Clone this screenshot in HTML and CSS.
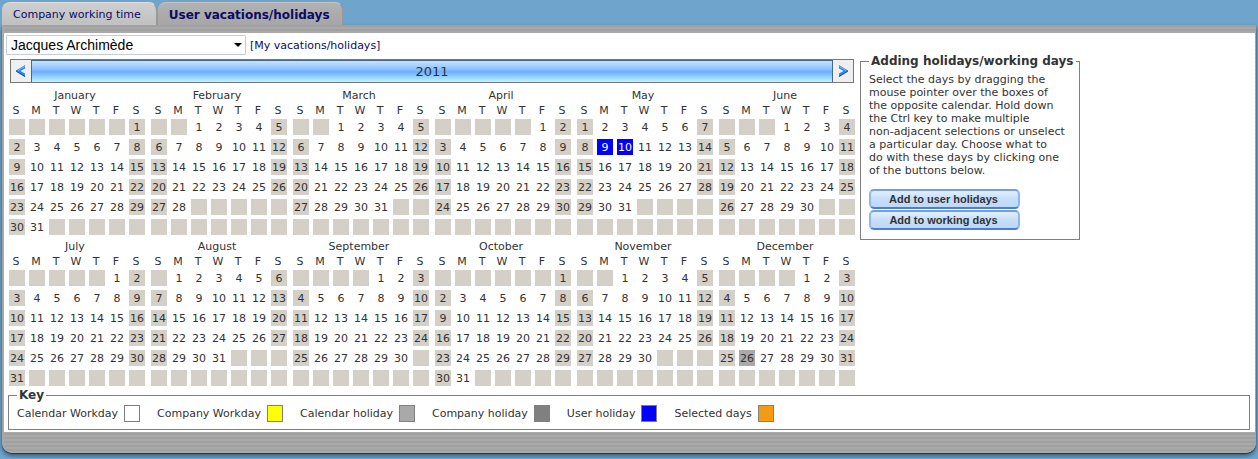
FILE: index.html
```html
<!DOCTYPE html>
<html lang="en">
<head>
<meta charset="utf-8">
<title>User vacations/holidays</title>
<link rel="stylesheet" href="styles.css">
</head>
<body>
<nav class="tabs">
  <a class="tab" href="#company">Company working time</a>
  <a class="tab tab-active" href="#user" aria-current="page">User vacations/holidays</a>
</nav>
<main class="panel">
  <div class="content">
    <div class="toolbar">
      <div class="select-box">
        <select class="user-select" aria-label="User"><option>Jacques Archimède</option></select>
      </div>
      <a class="own-link" href="#mine">[My vacations/holidays]</a>
    </div>
    <div class="columns">
      <section class="calendar">
        <div class="year-bar">
          <button class="year-button" type="button" aria-label="Previous year">
            <svg class="chevron" viewBox="0 0 12 14" aria-hidden="true"><path d="M10 1V4.500L5.500 7L10 9.500V13L1 7.500V6.500Z" fill="#2f86ee"/><path d="M10 9.500V13L1 7.500V6.500L10 12" fill="#1750b4"/><path d="M9.500 2.500L3 6.500" stroke="#7fbaf8" fill="none"/></svg>
          </button>
          <div class="year">2011</div>
          <button class="year-button" type="button" aria-label="Next year">
            <svg class="chevron" viewBox="0 0 12 14" aria-hidden="true"><path d="M2 1V4.500L6.500 7L2 9.500V13L11 7.500V6.500Z" fill="#2f86ee"/><path d="M2 9.500V13L11 7.500V6.500L2 12" fill="#1750b4"/><path d="M2.500 2.500L9 6.500" stroke="#7fbaf8" fill="none"/></svg>
          </button>
        </div>
        <div class="months" id="months"></div>
      </section>
      <fieldset class="box help">
        <legend>Adding holidays/working days</legend>
        <p class="help-text">Select the days by dragging the<br>mouse pointer over the boxes of<br>the opposite calendar. Hold down<br>the Ctrl key to make multiple<br>non-adjacent selections or unselect<br>a particular day. Choose what to<br>do with these days by clicking one<br>of the buttons below.</p>
        <div class="actions">
          <button class="action" type="button">Add to user holidays</button>
          <button class="action" type="button">Add to working days</button>
        </div>
      </fieldset>
    </div>
    <fieldset class="box key">
      <legend>Key</legend>
      <ul class="key-list">
        <li class="key-item">Calendar Workday <span class="swatch"></span></li>
        <li class="key-item">Company Workday <span class="swatch company-workday"></span></li>
        <li class="key-item">Calendar holiday <span class="swatch calendar-holiday"></span></li>
        <li class="key-item">Company holiday <span class="swatch company-holiday"></span></li>
        <li class="key-item">User holiday <span class="swatch user-holiday"></span></li>
        <li class="key-item">Selected days <span class="swatch selected-day"></span></li>
      </ul>
    </fieldset>
  </div>
</main>
<script src="calendar.js"></script>
</body>
</html>
```

FILE: styles.css
```css
* { box-sizing: border-box; }

body {
  margin: 0;
  padding: 2px 2px 5px;
  background: #6fa5cd;
  color: #333;
  font: 11px/13px Verdana, "DejaVu Sans", sans-serif;
}

a { color: #0b0b66; text-decoration: none; }
button { font: inherit; color: inherit; }

.tabs { display: flex; gap: 1px; }

.tab {
  height: 23px;
  padding: 0 15px 0 11px;
  border-top: 1px solid #ddd;
  border-right: 1px solid #999;
  border-radius: 8px 8px 0 0;
  background: linear-gradient(#cfcfcf, #c0c0c0);
  line-height: 24px;
}

.tab-active {
  padding-right: 12px;
  border-top-color: #c4c4c4;
  background: linear-gradient(#b2b2b2, #a6a6a6);
  font-size: 12px;
  font-weight: bold;
}

.panel {
  padding: 8px 1px 21px 0;
  border-left: 2px solid #a8a8a8;
  border-radius: 0 0 10px 10px;
  background: repeating-linear-gradient(#a1a1a1 0 2px, #a9a9a9 2px 4px);
  box-shadow: 0 1px 1px #26384a, 0 3px 5px #375d7c;
}

.content { padding: 2px 5px 2px 2px; background: #fff; }

.toolbar { display: flex; align-items: center; gap: 4px; }

.select-box { position: relative; width: 240px; }

.select-box::after {
  content: "";
  position: absolute;
  top: 8px;
  right: 4px;
  border: 4px solid transparent;
  border-top-color: #000;
  border-bottom: 0;
  pointer-events: none;
}

.user-select {
  display: block;
  width: 100%;
  height: 20px;
  padding: 0 16px 0 4px;
  border: 1px solid #c5cbdc;
  border-radius: 1px;
  appearance: none;
  background: #fff;
  color: #000;
  font: 14px/18px Arial, "Liberation Sans", sans-serif;
}

.columns { display: flex; align-items: flex-start; gap: 3px; padding-left: 1px; }

.calendar { padding-top: 4px; }

.year-bar {
  display: flex;
  height: 24px;
  margin: 0 3px 3px;
  border: 1px solid #777;
}

.year-button {
  display: flex;
  align-items: center;
  justify-content: center;
  width: 20px;
  padding: 0;
  border: 0;
  background: #efefef;
}

.chevron { width: 12px; height: 14px; }

.year {
  flex: 1;
  border: solid #47698d;
  border-width: 1px 1px 0;
  background: linear-gradient(#c4e2ff 0%, #94c7ff 35%, #6aaeff 52%, #8ccbff 70%, #bdf3ff 100%);
  font-size: 13px;
  line-height: 22px;
  text-align: center;
}

.months { display: grid; grid-template-columns: repeat(6, 140px); column-gap: 2px; }

.month { border-collapse: collapse; table-layout: fixed; width: 140px; }
.month caption { height: 15px; padding-right: 4px; line-height: 19px; }
.month th { height: 16px; padding: 3px 2px 0 0; font-weight: normal; line-height: 13px; }

.month td {
  width: 20px;
  height: 20px;
  padding: 4px 2px 2px;
  background-image: linear-gradient(#fff, #fff), linear-gradient(#fff, #fff), linear-gradient(#fff, #fff), linear-gradient(#fff, #fff);
  background-position: top, bottom, left, right;
  background-repeat: no-repeat;
  background-size: 100% 2px, 100% 2px, 2px 100%, 2px 100%;
  line-height: 14px;
  text-align: center;
}

.month .off { background-color: #d4d0c8; }

.month .calendar-holiday, .calendar-holiday { background-color: #a9a9a9; }
.month .user-holiday, .user-holiday { background-color: #00f; }
.month .user-holiday { color: #fff; }
.company-workday { background-color: #ff0; }
.company-holiday { background-color: #808080; }
.selected-day { background-color: #f49a14; }

.box { min-width: 0; margin: 0; border: 1px solid #808080; }
.box legend { padding: 0 2px; font-weight: bold; }

.help { width: 220px; padding: 5px 7px 9px 8px; }
.help legend { font-size: 12px; white-space: nowrap; }
.help-text { margin: 0 0 12px; white-space: nowrap; }
.actions { display: grid; gap: 1px; justify-items: start; }

.action {
  width: 151px;
  height: 20px;
  padding: 0 2px 0 0;
  border: 2px solid #6d9de3;
  border-color: #719fe4 #8db7ef #4b7ed4;
  border-radius: 5px;
  background: linear-gradient(#e2f0ff, #c8dffa 45%, #bdd8f9);
  font: bold 11px/15px Arial, "Liberation Sans", sans-serif;
}

.key { padding: 3px 8px 7px; margin: 1px 0 0 2px; }
.key legend { font-size: 12px; }
.key-list { display: flex; flex-wrap: wrap; gap: 17px; margin: 0; padding: 0; list-style: none; }
.key-item { display: flex; align-items: center; gap: 6px; }
.swatch { width: 16px; height: 17px; border: 1px solid #808080; }
```

FILE: calendar.js
```js
const YEAR = 2011;
const WEEKDAYS = ["S", "M", "T", "W", "T", "F", "S"];
const SPECIAL_DAYS = {
  "5-9": "user-holiday",
  "5-10": "user-holiday",
  "12-26": "calendar-holiday"
};

function buildMonth(month) {
  const first = new Date(YEAR, month, 1);
  const offset = first.getDay();
  const length = new Date(YEAR, month + 1, 0).getDate();
  const table = document.createElement("table");
  table.className = "month";
  table.createCaption().textContent = first.toLocaleString("en", { month: "long" });

  const head = table.createTHead().insertRow();
  WEEKDAYS.forEach(name => {
    const cell = document.createElement("th");
    cell.textContent = name;
    head.append(cell);
  });

  const body = table.createTBody();
  for (let week = 0; week < 6; week++) {
    const row = body.insertRow();
    for (let weekday = 0; weekday < 7; weekday++) {
      const day = week * 7 + weekday - offset + 1;
      const inMonth = day >= 1 && day <= length;
      const cell = row.insertCell();
      if (inMonth) cell.textContent = day;
      if (!inMonth || weekday === 0 || weekday === 6) cell.className = "off";
      const special = SPECIAL_DAYS[`${month + 1}-${day}`];
      if (inMonth && special) cell.className = special;
    }
  }
  return table;
}

const months = document.getElementById("months");
for (let month = 0; month < 12; month++) months.append(buildMonth(month));
```
